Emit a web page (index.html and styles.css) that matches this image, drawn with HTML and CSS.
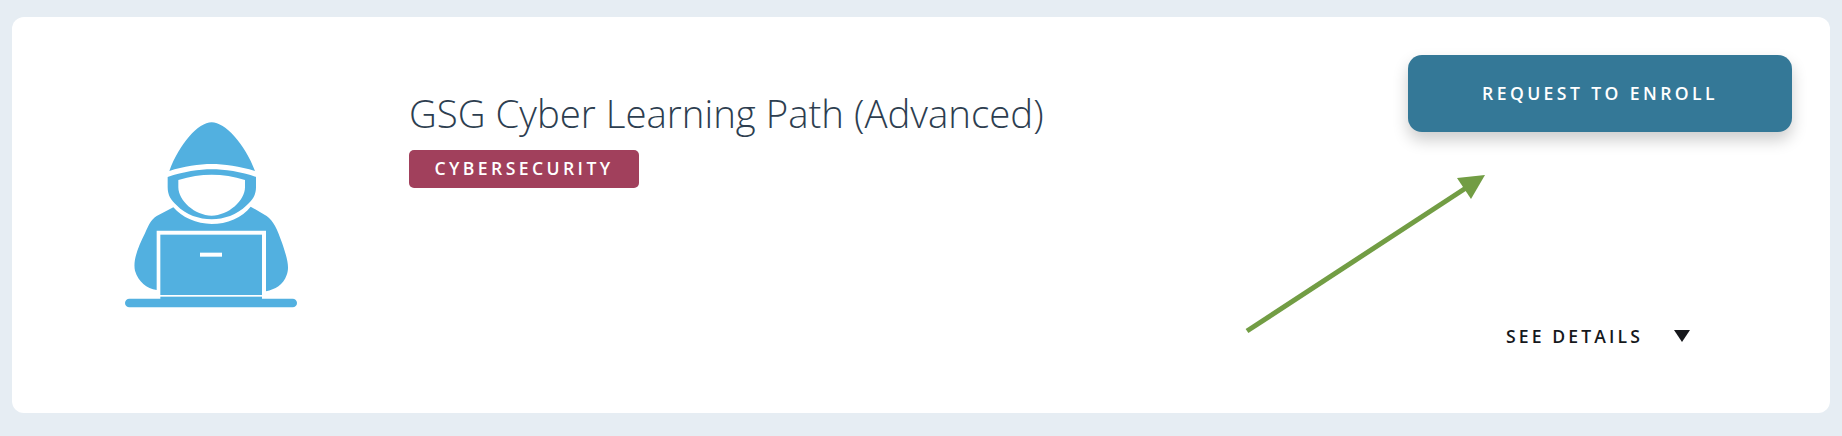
FILE: index.html
```html
<!DOCTYPE html>
<html lang="en">
<head>
<meta charset="utf-8">
<title>GSG Cyber Learning Path (Advanced)</title>
<link rel="stylesheet" href="styles.css">
</head>
<body>
<article class="card">
  <div class="thumb">
    <svg class="hacker" viewBox="0 0 660 660" width="220" height="220" aria-hidden="true">
      <path class="ink" d="M208 213C238 132 295 67 335 67C375 67 435 132 465 213C420 199 372 192 335 192C298 192 250 199 208 213Z"/>
      <path class="ink" fill-rule="evenodd" d="M203 231C250 215 298 208 335 208C372 208 425 215 468 231L468 262C468 285 458 300 440 316C410 345 372 358 335 358C298 358 258 345 230 316C212 300 203 285 203 262ZM235 240C270 229 302 224 335 224C368 224 402 229 435 240L435 262C435 302 385 347 335 347C285 347 235 302 235 262Z"/>
      <path class="ink" d="M220 322C245 352 290 372 335 372C380 372 428 352 452 320L500 348C520 362 532 388 546 428C560 470 570 500 560 525C550 555 525 568 498 574L498 392L170 392L170 570C140 565 115 545 105 512C98 480 115 440 135 400C146 375 152 360 170 348Z"/>
      <rect class="ink" x="181" y="404" width="305" height="181"/>
      <rect class="paper" x="300" y="458" width="66" height="12"/>
      <rect class="ink" x="181" y="590" width="305" height="8"/>
      <rect class="ink" x="75" y="596" width="516" height="26" rx="13"/>
    </svg>
  </div>
  <div class="summary">
    <h1 class="title">GSG Cyber Learning Path (Advanced)</h1>
    <span class="tag">CYBERSECURITY</span>
  </div>
  <div class="actions">
    <button class="enroll" type="button">REQUEST TO ENROLL</button>
    <button class="details" type="button">SEE DETAILS<span class="caret"></span></button>
  </div>
  <svg class="pointer" viewBox="0 0 1842 436" width="1842" height="436" aria-hidden="true">
    <line class="shaft" x1="1247" y1="331" x2="1472" y2="184"/>
    <polygon class="head" points="1485,175 1457,178 1471,199"/>
  </svg>
</article>
</body>
</html>
```

FILE: styles.css
```css
* { box-sizing: border-box; }

html, body { margin: 0; height: 100%; }

body {
  background: #e6edf3;
  padding: 17px 12px 23px;
  font-family: "Open Sans", "Liberation Sans", sans-serif;
  overflow: hidden;
}

.card {
  display: flex;
  height: 396px;
  padding: 38px 38px 0 88px;
  background: #fff;
  border-radius: 12px;
}

.thumb {
  flex: none;
  width: 220px;
  margin: 45px 89px 0 0;
}

.hacker { display: block; }
.ink { fill: #52b0e0; }
.paper { fill: #fff; }

.summary {
  flex: 1;
  padding-top: 32px;
  min-width: 0;
}

.title {
  margin: 0 0 11px;
  font-size: 38.4px;
  font-weight: 300;
  line-height: 52px;
  color: #2d3e50;
  white-space: nowrap;
}

.tag {
  display: inline-block;
  width: 230px;
  height: 38px;
  background: #a1405c;
  border-radius: 5px;
  color: #fff;
  font-size: 17.6px;
  font-weight: 600;
  line-height: 37px;
  letter-spacing: 3.4px;
  text-align: center;
}

.actions {
  flex: none;
  width: 384px;
  display: flex;
  flex-direction: column;
  align-items: center;
}

.enroll {
  width: 384px;
  height: 77px;
  padding: 0 0 2px;
  border: 0;
  border-radius: 14px;
  background: #347897;
  box-shadow: 0 8px 16px rgba(0, 0, 0, 0.2);
  color: #fff;
  font: 600 17.6px "Open Sans", sans-serif;
  letter-spacing: 3.4px;
}

.details {
  display: flex;
  align-items: center;
  margin: 192px 0 0 -4px;
  padding: 0;
  border: 0;
  background: none;
  color: #16181c;
  font: 600 17.6px/24px "Open Sans", sans-serif;
  letter-spacing: 3.1px;
}

.caret {
  width: 0;
  height: 0;
  margin-left: 31px;
  border-style: solid;
  border-width: 12px 8px 0;
  border-color: #16181c transparent transparent;
}

.pointer {
  position: absolute;
  left: 0;
  top: 0;
  pointer-events: none;
}

.shaft { stroke: #729d44; stroke-width: 5; }
.head { fill: #729d44; }
```
